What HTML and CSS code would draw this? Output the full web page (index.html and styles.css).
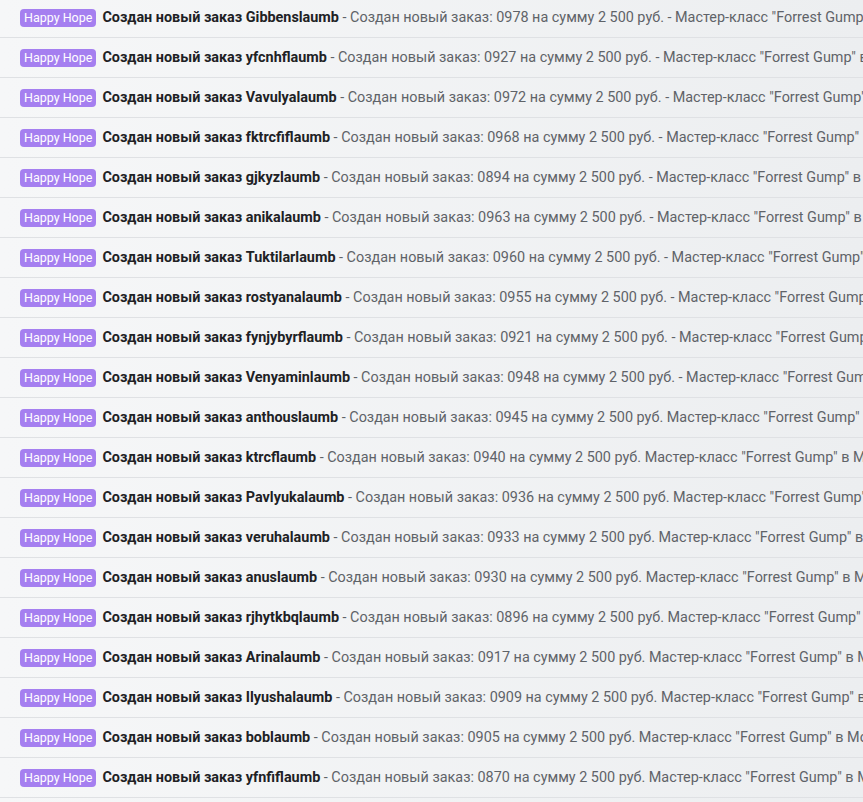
FILE: index.html
```html
<!DOCTYPE html>
<html lang="ru">
<head>
    <meta charset="UTF-8">
    <title>Входящие</title>
    <link rel="stylesheet" href="styles.css">
</head>
<body>
    <div class="mail-list" id="list"></div>

    <script>
        // Письма о заказах
        const letters = [
            ['Gibbenslaumb', '0978', true],
            ['yfcnhflaumb', '0927', true],
            ['Vavulyalaumb', '0972', true],
            ['fktrcfiflaumb', '0968', true],
            ['gjkyzlaumb', '0894', true],
            ['anikalaumb', '0963', true],
            ['Tuktilarlaumb', '0960', true],
            ['rostyanalaumb', '0955', true],
            ['fynjybyrflaumb', '0921', true],
            ['Venyaminlaumb', '0948', true],
            ['anthouslaumb', '0945', false],
            ['ktrcflaumb', '0940', false],
            ['Pavlyukalaumb', '0936', false],
            ['veruhalaumb', '0933', false],
            ['anuslaumb', '0930', false],
            ['rjhytkbqlaumb', '0896', false],
            ['Arinalaumb', '0917', false],
            ['Ilyushalaumb', '0909', false],
            ['boblaumb', '0905', false],
            ['yfnfiflaumb', '0870', false]
        ];

        const list = document.getElementById('list');
        letters.forEach(([name, num, dash]) => {
            const row = document.createElement('div');
            row.className = 'mail-row';
            row.innerHTML = `
                <span class="label">Happy Hope</span>
                <span class="subject">Создан новый заказ ${name}</span>
                <span class="snippet">&nbsp;- Создан новый заказ: ${num} на сумму 2 500 руб.${dash ? ' -' : ''} Мастер-класс "Forrest Gump" в Москве</span>
            `;
            list.appendChild(row);
        });
    </script>
</body>
</html>
```

FILE: styles.css
```css
body {
    margin: 0;
    font-family: Roboto, Arial, sans-serif;
    background: linear-gradient(to right, #f6f7f8, #eceef0);
    overflow: hidden;
}

.mail-list {
    margin-top: -2px;
}

.mail-row {
    display: flex;
    align-items: center;
    height: 39px;
    border-bottom: 1px solid #dfe1e4;
    padding-left: 20px;
    white-space: nowrap;
    overflow: hidden;
}

.label {
    background-color: #a57ff0;
    color: #fff;
    font-size: 12.5px;
    line-height: 18px;
    padding: 0 4px;
    border-radius: 4px;
    margin-right: 6px;
}

.subject {
    font-size: 14.4px;
    font-weight: bold;
    color: #202124;
}

.snippet {
    font-size: 14.4px;
    color: #5f6368;
}
```
